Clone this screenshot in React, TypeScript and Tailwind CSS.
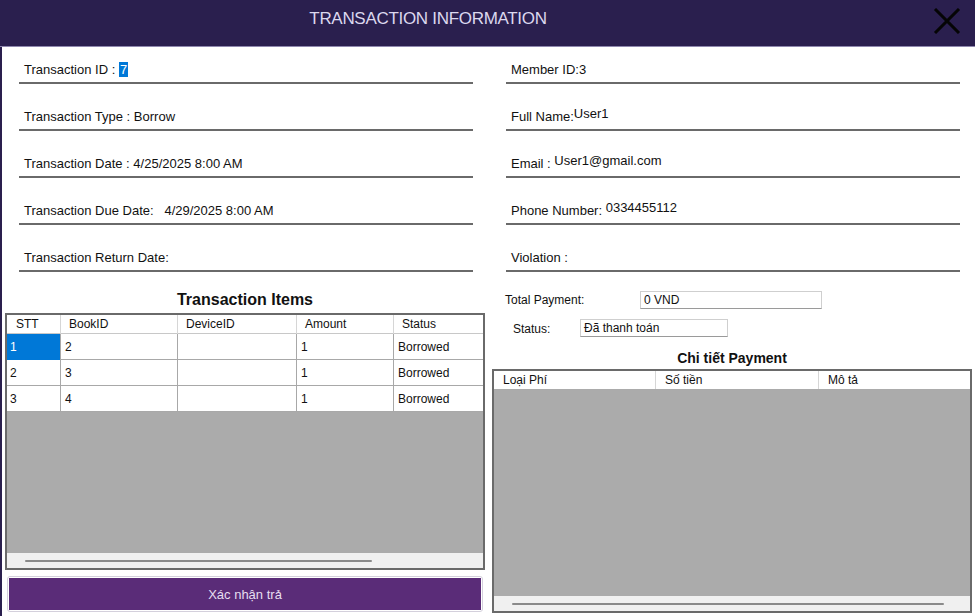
import React from "react";

type Field = { label: string; value?: string; selected?: boolean; raised?: boolean };

const leftFields: Field[] = [
  { label: "Transaction ID : ", value: "7", selected: true },
  { label: "Transaction Type : ", value: "Borrow" },
  { label: "Transaction Date : ", value: "4/25/2025 8:00 AM" },
  { label: "Transaction Due Date:   ", value: "4/29/2025 8:00 AM" },
  { label: "Transaction Return Date:" },
];

const rightFields: Field[] = [
  { label: "Member ID:", value: "3" },
  { label: "Full Name:", value: "User1", raised: true },
  { label: "Email : ", value: "User1@gmail.com", raised: true },
  { label: "Phone Number: ", value: "0334455112", raised: true },
  { label: "Violation :" },
];

const items = [
  { stt: "1", book: "2", device: "", amount: "1", status: "Borrowed" },
  { stt: "2", book: "3", device: "", amount: "1", status: "Borrowed" },
  { stt: "3", book: "4", device: "", amount: "1", status: "Borrowed" },
];

function FieldList({ fields }: { fields: Field[] }) {
  return (
    <div className="flex flex-col">
      {fields.map((f, i) => (
        <div
          key={f.label}
          className={`${i === 0 ? "h-[37px]" : "h-[47px]"} flex items-end border-b-2 border-[#6a6a6a] pl-[5px] pb-[4px]`}
        >
          <span className="text-[13px] leading-[16px] text-[#111] whitespace-pre">
            {f.label}
            {f.value &&
              (f.selected ? (
                <span className="bg-[#0078d7] text-white px-[1px]">{f.value}</span>
              ) : (
                <span className={f.raised ? "relative -top-[3px]" : ""}>{f.value}</span>
              ))}
          </span>
        </div>
      ))}
    </div>
  );
}

function ScrollBar({ thumb }: { thumb: string }) {
  return (
    <div className="h-[15px] bg-[#f0f0f0] flex items-center pl-[18px]">
      <div className={`${thumb} h-[2px] bg-[#8a8a8a] rounded-full`} />
    </div>
  );
}

export default function App() {
  return (
    <div className="w-[975px] h-[616px] bg-white flex flex-col overflow-hidden" style={{ fontFamily: '"Liberation Sans", Arial, sans-serif' }}>
      <div className="h-[47px] bg-[#2a1f4e] border-b border-[#8f88ae] flex items-center shrink-0">
        <div className="w-[856px] text-center text-[17px] text-[#dcd8ee] tracking-[-0.3px] -mt-[8px]">TRANSACTION INFORMATION</div>
        <div className="ml-auto mr-[14px] w-[28px] h-[26px] -mt-[4px]">
          <svg width="28" height="26" viewBox="0 0 28 26">
            <path d="M2 1 L26 25 M26 1 L2 25" stroke="#050505" strokeWidth="3" fill="none" />
          </svg>
        </div>
      </div>

      <div className="flex-1 border-l-2 border-[#2a1f4e] flex flex-col">
        <div className="flex">
          <div className="ml-[17px] w-[454px]">
            <FieldList fields={leftFields} />
          </div>
          <div className="ml-[33px] w-[454px]">
            <FieldList fields={rightFields} />
          </div>
        </div>

        <div className="flex">
          {/* left: transaction items */}
          <div className="ml-[3px] w-[480px] flex flex-col">
            <div className="pt-[18px] h-[39px] text-center text-[16px] font-bold leading-[20px] text-[#111]">Transaction Items</div>
            <div className="mt-[2px] h-[257px] border-2 border-[#6a6a6a] flex flex-col text-[12px] text-[#111]">
              <div className="grid grid-cols-[53px_117px_119px_97px_1fr] h-[19px] bg-white border-b border-[#c8c8c8]">
                <div className="pl-[9px] leading-[19px]">STT</div>
                <div className="pl-[8px] leading-[19px] border-l border-[#d6d6d6]">BookID</div>
                <div className="pl-[8px] leading-[19px] border-l border-[#d6d6d6]">DeviceID</div>
                <div className="pl-[8px] leading-[19px] border-l border-[#d6d6d6]">Amount</div>
                <div className="pl-[8px] leading-[19px] border-l border-[#d6d6d6]">Status</div>
              </div>
              {items.map((r, i) => (
                <div key={r.stt} className="grid grid-cols-[53px_117px_119px_97px_1fr] h-[26px] bg-white border-b border-[#a8a8a8]">
                  <div className={`pl-[3px] leading-[26px] ${i === 0 ? "bg-[#0078d7] text-white" : ""}`}>{r.stt}</div>
                  <div className="pl-[4px] leading-[26px] border-l border-[#a8a8a8]">{r.book}</div>
                  <div className="pl-[4px] leading-[26px] border-l border-[#a8a8a8]">{r.device}</div>
                  <div className="pl-[4px] leading-[26px] border-l border-[#a8a8a8]">{r.amount}</div>
                  <div className="pl-[4px] leading-[26px] border-l border-[#a8a8a8]">{r.status}</div>
                </div>
              ))}
              <div className="flex-1 bg-[#ababab]" />
              <ScrollBar thumb="w-[347px]" />
            </div>
            <div className="mt-[6px] ml-[2px] w-[476px] h-[36px] rounded-[3px] border border-[#d4d0dc] p-[1px]">
              <div className="h-full bg-[#5a2c78] flex items-center justify-center text-[13px] text-[#e6def0] pt-[2px]">Xác nhận trả</div>
            </div>
          </div>

          {/* right: payment */}
          <div className="ml-[7px] w-[480px] flex flex-col">
            <div className="mt-[19px] h-[18px] flex items-center">
              <div className="pl-[13px] w-[148px] text-[12px] text-[#111]">Total Payment:</div>
              <div className="w-[182px] h-[18px] border border-[#cfcfcf] border-b-[#9a9a9a] pl-[3px] text-[12px] leading-[16px] text-[#111]">0 VND</div>
            </div>
            <div className="mt-[10px] h-[18px] flex items-center">
              <div className="pl-[21px] w-[88px] text-[12px] text-[#111] pt-[2px]">Status:</div>
              <div className="w-[148px] h-[18px] border border-[#cfcfcf] border-b-[#9a9a9a] pl-[3px] text-[12px] leading-[16px] text-[#111]">Đã thanh toán</div>
            </div>
            <div className="mt-[12px] h-[19px] text-center text-[14px] font-bold leading-[19px] text-[#111]">Chi tiết Payment</div>
            <div className="mt-[1px] h-[244px] border-2 border-[#6a6a6a] flex flex-col text-[12px] text-[#111]">
              <div className="grid grid-cols-[161px_163px_1fr] h-[18px] bg-white">
                <div className="pl-[9px] leading-[18px]">Loại Phí</div>
                <div className="pl-[9px] leading-[18px] border-l border-[#d6d6d6]">Số tiền</div>
                <div className="pl-[9px] leading-[18px] border-l border-[#d6d6d6]">Mô tả</div>
              </div>
              <div className="flex-1 bg-[#ababab]" />
              <ScrollBar thumb="w-[432px]" />
            </div>
          </div>
        </div>
      </div>
    </div>
  );
}
